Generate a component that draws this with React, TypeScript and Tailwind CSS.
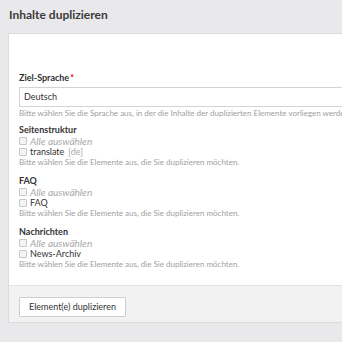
import React from 'react';

const sections = [
    { title: 'Seitenstruktur', items: [{ label: 'translate', suffix: '[de]' }] },
    { title: 'FAQ', items: [{ label: 'FAQ' }] },
    { title: 'Nachrichten', items: [{ label: 'News-Archiv' }] },
];

const Box: React.FC = () => (
    <span className="inline-block w-[8px] h-[8px] border border-[#c8c8c8] bg-[#f4f4f4] rounded-[1px] mr-[3px] shrink-0"></span>
);

const Help: React.FC<{ children: React.ReactNode }> = ({ children }) => (
    <p className="text-[8px] leading-[10px] text-[#a0a0a0] whitespace-nowrap">{children}</p>
);

export default function App() {
    return (
        <div className="w-[342px] h-[342px] overflow-hidden bg-[#e9e9eb] font-['Lato',sans-serif] text-[#333]">
            <h1 className="pt-[7px] pl-[9px] text-[12px] leading-[16px] font-bold text-[#3b3b3b]">Inhalte duplizieren</h1>
            <div className="mt-[10px] ml-[8px] w-[400px] border border-[#dcdcdc]">
                <div className="bg-white pl-[10px] pt-[38px] pb-[16px]">
                    <label className="block text-[9px] leading-[12px] font-bold">
                        Ziel-Sprache<span className="text-[#d00] ml-[1px]">*</span>
                    </label>
                    <div className="mt-[3px] h-[20px] border border-[#d4d4d4] flex items-center pl-[4px] text-[9px]">Deutsch</div>
                    <div className="mt-[1px]">
                        <Help>Bitte wählen Sie die Sprache aus, in der die Inhalte der duplizierten Elemente vorliegen werden.</Help>
                    </div>
                    {sections.map((s, i) => (
                        <div key={s.title} className={i === 0 ? 'mt-[6px]' : 'mt-[8px]'}>
                            <h4 className="text-[9px] leading-[12px] font-bold">{s.title}</h4>
                            <div className="flex items-center h-[10.5px] text-[10px] italic text-[#a8a8a8]">
                                <Box />
                                Alle auswählen
                            </div>
                            {s.items.map((it) => (
                                <div key={it.label} className="flex items-center h-[10.5px] text-[9px]">
                                    <Box />
                                    {it.label}
                                    {it.suffix && <span className="ml-[4px] text-[#aaa]">{it.suffix}</span>}
                                </div>
                            ))}
                            <Help>Bitte wählen Sie die Elemente aus, die Sie duplizieren möchten.</Help>
                        </div>
                    ))}
                </div>
                <div className="bg-[#f2f2f3] border-t border-[#e2e2e2] pl-[10px] pt-[6px] pb-[5px]">
                    <button className="h-[20px] w-[107px] border border-[#cfcfcf] bg-white text-[9px] rounded-[1px]">
                        Element(e) duplizieren
                    </button>
                </div>
            </div>
        </div>
    );
}
